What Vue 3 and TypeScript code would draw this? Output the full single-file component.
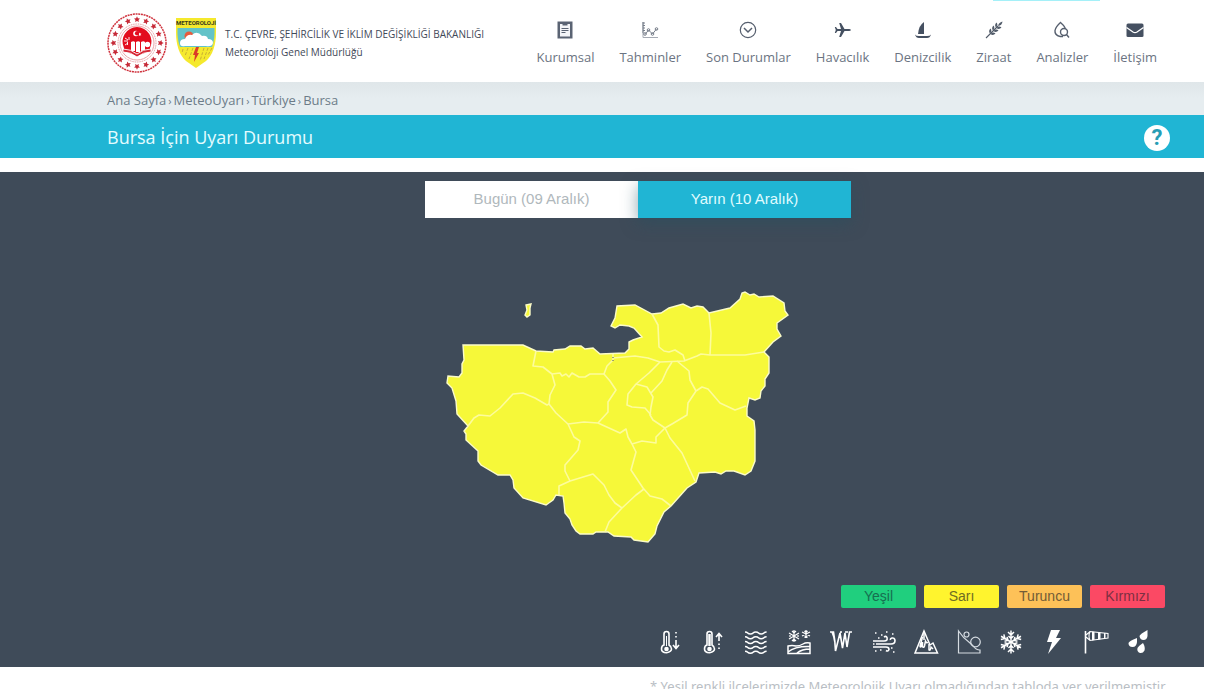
<script setup lang="ts">
import { ref } from 'vue'

interface NavItem {
  id: string
  label: string
}

const navItems: NavItem[] = [
  { id: 'corporate', label: 'Kurumsal' },
  { id: 'forecast', label: 'Tahminler' },
  { id: 'latest', label: 'Son Durumlar' },
  { id: 'aviation', label: 'Havacılık' },
  { id: 'marine', label: 'Denizcilik' },
  { id: 'agriculture', label: 'Ziraat' },
  { id: 'analysis', label: 'Analizler' },
  { id: 'contact', label: 'İletişim' }
]

const crumbs: string[] = ['Ana Sayfa', 'MeteoUyarı', 'Türkiye', 'Bursa']
const days: string[] = ['Bugün (09 Aralık)', 'Yarın (10 Aralık)']
const activeDay = ref<number>(1)

const levels = [
  { id: 'green', label: 'Yeşil' },
  { id: 'yellow', label: 'Sarı' },
  { id: 'orange', label: 'Turuncu' },
  { id: 'red', label: 'Kırmızı' }
]

const starAngles: number[] = Array.from({ length: 16 }, (_, i) => i * 22.5)

const provinceOutline =
  '463,345 523,345 536,351 553,352 554,350 565,349 570,346 581,346 585,349 593,348 600,354 625,353 629,349 629,342 633,340 642,337 634,328 629,326 620,325 615,328 611,326 615,318 617,306 635,305 652,314 661,313 669,308 683,304 691,308 697,306 703,307 709,313 730,308 740,299 742,293 745,292 750,295 754,294 759,297 773,296 784,303 785,311 788,315 777,323 777,329 781,336 773,342 764,352 769,357 769,373 765,379 765,386 761,391 760,398 755,400 749,398 747,408 747,416 754,421 755,430 755,461 751,471 745,475 734,471 726,471 721,474 715,472 699,473 696,482 687,488 671,506 664,512 657,526 655,534 648,542 634,540 631,537 614,536 608,532 596,532 593,534 580,534 576,531 572,525 570,519 565,513 564,503 563,496 556,495 553,500 546,505 523,498 514,488 513,480 510,475 498,475 481,465 478,461 478,451 466,440 466,434 464,431 468,426 457,414 456,401 452,388 447,383 448,376 459,377 462,373 462,364 464,360'

const districtBorders: string[] = [
  'M468 426L474 418L479 415L490 416L500 408L513 394L523 393L535 398L547 405L549 404',
  'M536 351L533 366L543 367L552 374L555 385L550 395L549 404L556 413L568 424',
  'M552 374L560 373L562 376L566 374L569 377L572 373L579 377L585 377L590 374L604 374',
  'M568 424L584 422L598 423L608 412L608 402L616 390L610 381L604 374L607 366L613 360L613 354',
  'M598 423L620 433L626 429L628 437L632 444',
  'M613 358L635 356L648 358L660 362L684 361L697 356L701 354L710 355L745 355L764 352',
  'M652 314L658 325L659 347L664 351L669 352L675 350L683 355L685 361',
  'M709 313L711 333L710 355',
  'M660 362L649 373L636 384L628 394L627 405L632 407L645 408L651 415',
  'M636 384L647 387L653 397L651 407L650 415L653 420L665 428',
  'M672 362L667 370L662 381L651 393',
  'M677 361L689 371L690 380L696 391',
  'M696 391L702 387L708 389L720 403L735 410L746 406',
  'M696 391L688 403L687 415L672 424L665 428L656 437L656 443L642 441L632 444',
  'M632 444L636 452L631 470L643 488L650 496L662 499L671 506',
  'M665 428L670 438L682 453L695 481',
  'M644 489L636 495L622 508L609 522L605 532',
  'M622 508L615 503L609 495L604 485L593 474L570 481L559 486L559 495',
  'M568 424L574 437L580 441L578 450L565 465L565 471L570 481'
]
</script>

<template>
  <div class="page">
    <div class="loader"></div>
    <header class="header">
      <a class="brand" href="#">
        <svg class="seal" viewBox="0 0 60 60" aria-hidden="true">
          <circle cx="30" cy="30" r="29" fill="#fff" stroke="#d0343f" stroke-width="1.5" stroke-dasharray="2 .7" />
          <path
            v-for="a in starAngles"
            :key="a"
            :transform="`rotate(${a} 30 30)`"
            d="M30 3.300l.9 1.900 2.100.3-1.500 1.500.4 2.100-1.900-1-1.900 1 .4-2.100L27 5.500l2.100-.3z"
            fill="#c62a38"
          />
          <circle cx="30" cy="30" r="19" fill="none" stroke="#e58a90" stroke-width="1" stroke-dasharray="1 .8" />
          <circle cx="30" cy="30" r="17" fill="none" stroke="#eaa3a8" stroke-width="1" />
          <path d="M17 35A14.500 14.500 0 1 1 43 35L43 38L30 43L17 38z" fill="#e30d1e" />
          <circle cx="29" cy="20.500" r="2.800" fill="#fff" />
          <circle cx="30.200" cy="20.300" r="2.300" fill="#e30d1e" />
          <path d="M32 19.500l1 1 1.400-.3-.8 1.200.7 1.200-1.400-.3-1 .9z" fill="#fff" />
          <path d="M24 29q2.500-1.500 4 0v9h-4zM29 29q2.500-1.500 4 0v10h-4zM34 29q2.500-1.500 4 0v8l-4 1z" fill="#fff" />
          <circle cx="40.500" cy="31.500" r="2.700" fill="#fff" />
          <path d="M17 28h4M18 25l3 2M18 32l3-2M22 24v3M20.500 29v3" stroke="#fff" stroke-width=".9" />
          <path d="M16 36q8 0 14 5q6-5 14-5v3q-8 0-14 5q-6-5-14-5z" fill="#d52635" stroke="#fff" stroke-width=".9" />
        </svg>
        <svg class="shield" viewBox="0 0 42 52" aria-hidden="true">
          <path d="M1 1H41V15Q41 35 31 44L21 51L11 44Q1 35 1 15z" fill="#f5e92d" />
          <path d="M2.500 11H39.500V17Q39 25 37 30H5Q3 25 2.500 17z" fill="#63c3c8" />
          <circle cx="14" cy="19" r="4.500" fill="#e65a3c" />
          <path d="M5 26q0-4 5-4q2-5 7-4q5-5 10 1q5-1 6 3q5 0 5 4q-1 4-7 3H10q-5 1-5-3z" fill="#fff" />
          <path d="M8 32l-1 4M13 31l-3 8M18 31l-4 11M29 31l-4 13M33 31l-4 11M37 31l-4 7" stroke="#c8ae35" stroke-width="1" stroke-dasharray="3 1.500" />
          <path d="M21 30h3l-2 6h2l-5 9 1-7h-2z" fill="#db3b28" />
          <text x="21" y="8" text-anchor="middle" class="shield-text">METEOROLOJİ</text>
        </svg>
        <span class="brand-text">
          <span class="ministry">T.C. ÇEVRE, ŞEHİRCİLİK VE İKLİM DEĞİŞİKLİĞİ BAKANLIĞI</span>
          <span class="agency">Meteoroloji Genel Müdürlüğü</span>
        </span>
      </a>
      <nav class="nav">
        <a v-for="item in navItems" :key="item.id" class="nav-link" href="#">
          <svg class="nav-icon" viewBox="0 0 18 18" aria-hidden="true">
            <g v-if="item.id === 'corporate'">
              <path d="M1.500 .5h15v17h-15z" fill="#5a6373" />
              <path d="M4 3h10v12.500H4z" fill="#f4f5f8" />
              <path d="M6.500 2h5v2.500h-5z" fill="#5a6373" />
              <path d="M5.500 7.500h7M5.500 9.500h7M5.500 11.500h4" stroke="#5a6373" />
            </g>
            <g v-else-if="item.id === 'forecast'" fill="none" stroke="#777e8a">
              <path d="M2 1v15.500h15" stroke="#a5aab3" /><path d="M2 2h2M2 4.500h2M2 7h2M2 9.500h2M2 1v11" />
              <path d="M4.500 13L7.500 9L11.500 13L15.500 8" />
              <circle cx="4" cy="13" r="1.300" /><circle cx="7.500" cy="9" r="1.300" />
              <circle cx="11.500" cy="13" r="1.300" /><circle cx="15.500" cy="8" r="1.300" />
            </g>
            <g v-else-if="item.id === 'latest'" fill="none" stroke="#565f6e" stroke-width="1.200">
              <circle cx="9" cy="9" r="7.700" /><path d="M5 7l4 4 4-4" stroke-width="1.500" />
            </g>
            <path
              v-else-if="item.id === 'aviation'"
              d="M17 9q-.5 1-2 1h-4.500L7 16H5.200L7 10H3.500L2 12H.8L1.800 9L.8 6H2l1.500 2H7L5.200 2H7l3.500 6H15q1.500 0 2 1z"
              fill="#455061"
            />
            <g v-else-if="item.id === 'marine'" fill="#455061">
              <path d="M10 1v12H4Q5 4 10 1z" />
              <path d="M1 13.500q1 1.500 4 1.500h8q3 0 4-1.500-1 3.500-4 3.500H5Q2 17 1 13.500z" />
            </g>
            <g v-else-if="item.id === 'agriculture'" fill="#515b69">
              <path d="M1 17L13 5" stroke="#515b69" stroke-width="1.100" />
              <path d="M5 12.500Q3 10 5.500 7.500Q7.500 10 5 12.500zM8 9.500Q6 7 8.500 4.500Q10.500 7 8 9.500zM11 6.500Q9 4 11.500 1.500Q13.500 4 11 6.500z" />
              <path d="M5.500 13Q8 15 10.500 12.500Q8 10.500 5.500 13zM8.500 10Q11 12 13.500 9.500Q11 7.500 8.500 10zM11.500 7Q14 9 16.500 6.500Q14 4.500 11.500 7z" />
              <path d="M13 5q.5-3.500 4.500-4.500q-.5 4-4.500 4.500z" />
            </g>
            <g v-else-if="item.id === 'analysis'" fill="none" stroke="#565f6e" stroke-width="1.400">
              <path d="M7 15.500Q1.500 14 2 9.500Q2.500 6 7.500 1.500Q11 4.500 12.200 7" />
              <circle cx="11" cy="11" r="3.500" /><path d="M13.500 13.500L16 16.500M7 15.500h3" />
            </g>
            <g v-else>
              <path d="M2 2.500h14q1.500 0 1.500 1.500v11q0 1-1.500 1H2q-1.500 0-1.500-1V4q0-1.500 1.500-1.500z" fill="#455061" />
              <path d="M.5 6.500L7 11q2 1.200 4 0l6.500-4.500" fill="none" stroke="#fff" stroke-width="1.300" />
            </g>
          </svg>
          <span>{{ item.label }}</span>
        </a>
      </nav>
    </header>

    <nav class="crumbs" aria-label="Konum">
      <template v-for="(crumb, i) in crumbs" :key="crumb">
        <span v-if="i > 0" class="sep">›</span>
        <a href="#">{{ crumb }}</a>
      </template>
    </nav>

    <div class="title-bar">
      <h1>Bursa İçin Uyarı Durumu</h1>
      <button class="help" type="button">?</button>
    </div>

    <main class="board">
      <div class="tabs">
        <button
          v-for="(day, i) in days"
          :key="day"
          type="button"
          class="tab"
          :class="{ active: activeDay === i }"
          @click="activeDay = i"
        >{{ day }}</button>
      </div>

      <svg class="map" viewBox="440 285 397 265" role="img" aria-label="Bursa">
        <polygon :points="provinceOutline" class="district" stroke-width="1.4" />
        <polygon points="526,305 531,304 530,308 530,315 527,317 525,315 527,310" class="district" stroke-width="1.4" />
        <path v-for="d in districtBorders" :key="d" :d="d" class="border" stroke-width="1.6" />
        <path d="M613 357v4" stroke="#3f4b59" stroke-dasharray="1 2" />
      </svg>

      <ul class="levels">
        <li v-for="level in levels" :key="level.id" :class="level.id">{{ level.label }}</li>
      </ul>

      <div class="hazards">
        <svg viewBox="0 0 24 24"><g fill="none" stroke="#fff" stroke-width="1.600">
          <path d="M5 15V4q0-2.500 2.500-2.500T10 4v11q2.500 1.500 2.500 4t-5 3.800Q2.500 22.500 2.500 19T5 15z" />
          <path d="M7.500 6v10" stroke-width="1" /><path d="M17 2v1.500M17 6v1.500M17 10v8M14 15l3 3.500 3-3.500" /></g>
          <circle cx="7.500" cy="19" r="2.300" fill="#fff" />
        </svg>
        <svg viewBox="0 0 24 24"><g fill="none" stroke="#fff" stroke-width="1.600">
          <path d="M5 15V4q0-2.500 2.500-2.500T10 4v11q2.500 1.500 2.500 4t-5 3.800Q2.500 22.500 2.500 19T5 15z" />
          <path d="M7.500 4v12" stroke-width="2.500" /><path d="M17 19v-1.500M17 15v-1.500M17 11V4M14 7l3-3.500L20 7" /></g>
          <circle cx="7.500" cy="19" r="2.300" fill="#fff" />
        </svg>
        <svg viewBox="0 0 24 24"><g fill="none" stroke="#fff" stroke-width="1.500">
          <path v-for="y in [2, 6.8, 11.6, 16.4, 21.2]" :key="y" :d="`M1 ${y}q1.800 0 2.700 1t2.700 1t2.700-1t2.700-1t2.700 1t2.700 1t2.700-1t2.700-1`" />
        </g></svg>
        <svg viewBox="0 0 24 24"><g fill="none" stroke="#fff" stroke-width="1.200">
          <path d="M7 0v12M2 3l10 6M2 9l10-6M5 1l2 2 2-2M5 11l2-2 2 2M3 5v2M11 5v2M19 0v8M15 2l8 4M15 6l8-4M17.500 1l1.500 1.500 1.500-1.500M17.500 7.500l1.500-1.500 1.500 1.500" />
          <path d="M1 16q4-1 8 0 4 0 7-2t7-1v10.500H1zM1 22q7-6 22-5.500M10 23q5-4 13-4" stroke-width="1.500" />
        </g></svg>
        <svg viewBox="0 0 24 24"><path d="M1 2h3.500q1.500 8 2 19L11 3l2.500 15L16 3l2 14L20.500 2H23M3 2q2 4 3 11M11 2h2M16 2h3" fill="none" stroke="#fff" stroke-width="1.600" /></svg>
        <svg viewBox="0 0 24 24"><g fill="none" stroke="#fff" stroke-width="1.600">
          <path d="M1 11h11q4 0 3-3.500-1-2-3-.5M4 14h15q4 0 4-3.500-.5-3-3-2.500-2 .5-1.500 2M1 17h13q3 0 3 2.500-1 2.500-3 1" />
          <path d="M3 3h1.500M9 5h1.500M14 2h1.500M20 4h1.500M6 8h1.500M3 21h1.500M8 20h1.500M19 18h1.500M21 22h1.500M1 14h1.500" />
        </g></svg>
        <svg viewBox="0 0 24 24"><g fill="none" stroke="#fff" stroke-width="1.500">
          <path d="M1 23L10 1l6 14 3-2L23.500 23z" />
          <path d="M8.500 7L6 16q0 2 1.500 0l1-4v5q1.500 1 2-1l1-5q1.500 3 2 1M15 14v6q1.500 1 2-3l2 2M10 2v8" />
        </g></svg>
        <svg viewBox="0 0 24 24"><g fill="none" stroke="#d6dce2" stroke-width="1.200">
          <path d="M1.500 1v22H23v-3q-4 0-7-4l-3-3Q6 8 1.500 1z" /><circle cx="9.500" cy="4.500" r="2.500" /><circle cx="18.500" cy="12" r="4.800" />
        </g></svg>
        <svg viewBox="0 0 24 24"><g fill="none" stroke="#fff" stroke-width="1.500">
          <path v-for="a in [0, 60, 120, 180, 240, 300]" :key="a" :transform="`rotate(${a} 12 12)`" d="M12 12V.5M9 2l3 3 3-3M9.500 6l2.500 2.500L14.500 6" />
        </g></svg>
        <svg viewBox="0 0 24 24"><path d="M9 0h9l-4 8h5L6 24l4-12H5z" fill="#fff" /></svg>
        <svg viewBox="0 0 24 24">
          <path d="M1.500 1v22.500" stroke="#fff" stroke-width="1.600" />
          <path d="M2 5l4-3.500 18 2v4.500L6 10.500 2 7M6 1.500q-2 4.500 0 9" fill="none" stroke="#fff" stroke-width="1.100" />
          <path d="M8 1.500l2.500.4v8l-2.500.6zM14 2.300l2.500.4v6.500l-2.500.5zM20 3l1.500.2v4.600l-1.500.4z" fill="#fff" />
        </svg>
        <svg viewBox="0 0 24 24"><g fill="#fff">
          <path d="M20.500 0v6q-.5 4-4 4T12.500 6Q13 4 20.500 0z" />
          <path d="M10 8v4q-.5 5-4.500 5T1.500 13Q2 11 10 8z" />
          <path d="M16 13q2.500 4 1.500 7.500-1.500 3-4.500 2.500-3.500-1.500-2.500-5Q11.500 16 16 13z" />
        </g></svg>
      </div>
    </main>

    <footer class="note">* Yeşil renkli ilçelerimizde Meteorolojik Uyarı olmadığından tabloda yer verilmemiştir.</footer>
  </div>
</template>

<style>
body {
  margin: 0;
  background: #fff;
}
</style>

<style scoped>
.page {
  position: relative;
  padding-right: 1px;
  font-family: 'Open Sans', 'Noto Sans', sans-serif;
}
.page a {
  color: inherit;
  text-decoration: none;
}
.loader {
  position: absolute;
  top: 0;
  right: 105px;
  width: 107px;
  height: 1px;
  background: #a5f0f8;
}
.header {
  display: flex;
  align-items: flex-start;
  justify-content: space-between;
  height: 82px;
  padding: 0 47px 0 107px;
  box-sizing: border-box;
}
.brand {
  display: flex;
  align-items: flex-start;
  padding-top: 13px;
}
.seal {
  width: 60px;
  height: 60px;
}
.shield {
  width: 42px;
  height: 52px;
  margin: 4px 8px 0;
}
.shield-text {
  font: bold 6px Roboto, 'Liberation Sans', sans-serif;
  fill: #38391c;
}
.brand-text {
  display: flex;
  flex-direction: column;
  padding-top: 12px;
  font-size: 10px;
  line-height: 18px;
  color: #3f4958;
  white-space: nowrap;
}
.nav {
  display: flex;
  gap: 25px;
  padding-top: 21px;
}
.nav-link {
  display: flex;
  flex-direction: column;
  align-items: center;
  gap: 8px;
  font-size: 13px;
  line-height: 20px;
  white-space: nowrap;
}
.page .nav-link {
  color: #6b7482;
}
.nav-icon {
  width: 18px;
  height: 18px;
}
.crumbs {
  display: flex;
  align-items: center;
  gap: 2px;
  height: 33px;
  padding: 3px 107px 0;
  box-sizing: border-box;
  background: linear-gradient(#dfe6e9, #e6edf0 50%);
  font-size: 13px;
  color: #6c7c88;
}
.sep {
  font-size: 11px;
}
.title-bar {
  display: flex;
  align-items: center;
  justify-content: space-between;
  height: 43px;
  padding: 0 34px 0 107px;
  background: #20b5d4;
}
.title-bar h1 {
  margin: 0;
  font-size: 18px;
  line-height: 26px;
  font-weight: 400;
  color: #e4fcff;
}
.help {
  width: 26px;
  height: 26px;
  margin-top: 3px;
  padding: 0;
  border: 0;
  border-radius: 50%;
  background: #fff;
  color: #279db5;
  font: bold 22px/26px Roboto, sans-serif;
}
.board {
  display: flex;
  flex-direction: column;
  align-items: center;
  margin-top: 14px;
  padding: 9px 35px 13px 107px;
  background: #3f4b59;
}
.tabs {
  display: flex;
  width: 426px;
  max-width: 100%;
}
.tab {
  flex: 1;
  height: 37px;
  padding: 0 0 2px;
  border: 0;
  background: #fff;
  color: #b0b8bc;
  font: 15px 'Liberation Sans', Arial, sans-serif;
}
.tab.active {
  background: #20b5d4;
  color: #e0fcff;
  box-shadow: 0 5px 16px rgba(36, 80, 96, 0.5);
}
.map {
  width: 397px;
  height: 265px;
  margin-top: 67px;
}
.district {
  fill: #f6f839;
  stroke: #fbfbc8;
}
.border {
  fill: none;
  stroke: #fdfc9c;
  stroke-linejoin: round;
}
.levels {
  display: flex;
  align-self: flex-end;
  gap: 8px;
  margin: 35px 4px 0 0;
  padding: 0;
  list-style: none;
}
.levels li {
  width: 75px;
  border-radius: 2px;
  font: 14px/23px 'Liberation Sans', Arial, sans-serif;
  text-align: center;
}
.green {
  background: #20cf7e;
  color: #176e50;
}
.yellow {
  background: #fff42e;
  color: #6f6c24;
}
.orange {
  background: #fdc158;
  color: #725c36;
}
.red {
  background: #fb4964;
  color: #7d2f42;
}
.hazards {
  display: flex;
  align-self: flex-end;
  justify-content: space-between;
  width: 492px;
  margin: 22px 18px 0 0;
}
.hazards svg {
  width: 24px;
  height: 24px;
  overflow: visible;
}
.note {
  height: 22px;
  padding: 9px 37px 0 0;
  box-sizing: border-box;
  overflow: hidden;
  font-family: 'Noto Sans', 'Open Sans', sans-serif;
  font-size: 13px;
  line-height: 20px;
  color: #b9bec4;
  text-align: right;
  white-space: nowrap;
}
</style>
